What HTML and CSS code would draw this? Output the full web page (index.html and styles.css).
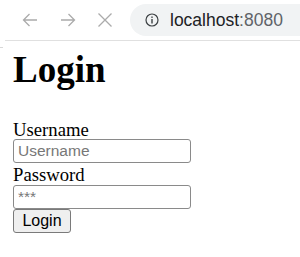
FILE: index.html
```html
<!DOCTYPE html>
<html lang="en">
<head>
  <meta charset="UTF-8">
  <meta name="viewport" content="width=device-width, initial-scale=1.0">
  <title>Login</title>
  <link rel="stylesheet" href="styles.css">
</head>
<body>
  <div class="toolbar">
    <span class="nav-icon back">
      <svg width="16" height="16" viewBox="0 0 16 16"><path d="M15 8H1.5M7.5 2L1.5 8l6 6" fill="none" stroke="currentColor" stroke-width="1.3"/></svg>
    </span>
    <span class="nav-icon forward">
      <svg width="16" height="16" viewBox="0 0 16 16"><path d="M1 8h13.5M8.5 2l6 6-6 6" fill="none" stroke="currentColor" stroke-width="1.3"/></svg>
    </span>
    <span class="nav-icon close">
      <svg width="16" height="16" viewBox="0 0 16 16"><path d="M1.5 1.5l13 13M14.5 1.5l-13 13" fill="none" stroke="currentColor" stroke-width="1.3"/></svg>
    </span>
    <div class="address">
      <svg class="info-icon" width="14" height="14" viewBox="0 0 14 14">
        <circle cx="7" cy="7" r="6" fill="none" stroke="currentColor" stroke-width="1.2"/>
        <rect x="6.3" y="6" width="1.4" height="4.5" fill="currentColor"/>
        <rect x="6.3" y="3.5" width="1.4" height="1.4" fill="currentColor"/>
      </svg>
      <span class="host">localhost<span class="port">:8080</span></span>
    </div>
  </div>
  <div class="divider"></div>

  <div class="page">
    <h1>Login</h1>
    <form class="login-form">
      <label for="username">Username</label>
      <input type="text" id="username" class="field first" placeholder="Username">
      <label for="password">Password</label>
      <input type="password" id="password" class="field second" placeholder="***">
      <button type="submit" class="login-btn">Login</button>
    </form>
  </div>
</body>
</html>
```

FILE: styles.css
```css
body {
  margin: 0;
  font-family: 'Liberation Serif', serif;
  color: #000;
  background: #fff;
}

.toolbar {
  height: 40px;
  display: flex;
  align-items: center;
  padding-left: 22px;
  overflow: hidden;
}

.nav-icon {
  display: flex;
  color: #ababab;
}

.nav-icon.forward {
  margin-left: 22px;
}

.nav-icon.close {
  margin-left: 21px;
}

.address {
  flex: 1 0 auto;
  height: 32px;
  margin-left: 17px;
  margin-right: -20px;
  border-radius: 16px;
  background-color: #f1f3f4;
  display: flex;
  align-items: center;
  padding-left: 15px;
}

.info-icon {
  color: #3c4043;
}

.host {
  margin-left: 11px;
  font-family: 'Liberation Sans', sans-serif;
  font-size: 17.5px;
  color: #202124;
}

.port {
  color: #5f6368;
}

.divider {
  height: 1px;
  margin-left: 5px;
  background-color: #e0e0e0;
}

.page {
  padding: 8px 13px 0;
  background: linear-gradient(#d8d8d8, #d8d8d8) 0 6px / 3px 1px no-repeat;
}

h1 {
  margin: 0 0 29px;
  font-size: 37px;
  line-height: 42px;
}

.login-form {
  display: flex;
  flex-direction: column;
  align-items: flex-start;
}

label {
  font-size: 18.7px;
  line-height: 19px;
}

.field {
  box-sizing: border-box;
  width: 178px;
  height: 24px;
  margin: 0;
  padding: 0 4px;
  border: 1px solid #8a8a8a;
  border-radius: 3px;
  font-family: 'Liberation Sans', sans-serif;
  font-size: 15.5px;
}

.field::placeholder {
  color: #777;
}

.field.first {
  margin-bottom: 2px;
}

.field.second {
  margin-top: 1px;
}

.login-btn {
  box-sizing: border-box;
  width: 58px;
  height: 24px;
  margin: 0;
  padding: 0;
  border: 1px solid #7a7a7a;
  border-radius: 3px;
  background-color: #efefef;
  font-family: 'Liberation Sans', sans-serif;
  font-size: 16px;
  color: #000;
}
```
